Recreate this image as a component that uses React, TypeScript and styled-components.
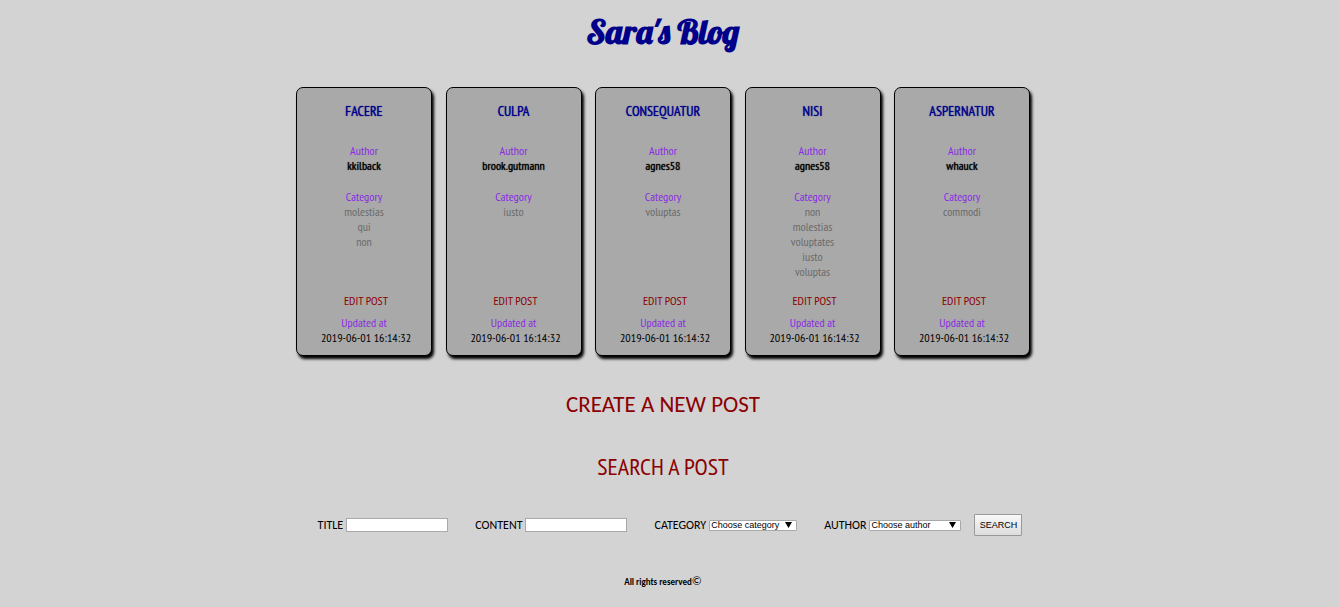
import React from "react";
import styled, { createGlobalStyle } from "styled-components";

const narrow = `"PT Sans Narrow", "Liberation Sans Narrow", "Open Sans", sans-serif`;

const GlobalStyle = createGlobalStyle`
  * { box-sizing: border-box; }
  body {
    margin: 0;
    padding: 0 13px 0 0;
    background: lightgray;
    color: #000;
    font-family: Carlito, "Open Sans", sans-serif;
    font-size: 12px;
    line-height: 15px;
  }
`;

const Page = styled.div`
  display: flex;
  flex-direction: column;
  align-items: center;
`;

const SiteTitle = styled.h1`
  margin: 8px 0 31px;
  color: darkblue;
  font-family: Lobster, "Liberation Serif", serif;
  font-size: 34px;
  font-weight: 700;
  line-height: 48px;
`;

const Posts = styled.main`
  display: flex;
  flex-wrap: wrap;
  justify-content: space-between;
  gap: 13px;
  width: 100%;
  max-width: 734px;
`;

const Card = styled.article`
  display: flex;
  flex-direction: column;
  width: 136px;
  min-height: 269px;
  padding: 13px 4px 10px;
  border: 1px solid #000;
  border-radius: 7px;
  background: darkgray;
  box-shadow: 2px 3px 3px #000;
  font-family: ${narrow};
  font-size: 12px;
  text-align: center;
`;

const CardTitle = styled.h2`
  margin: 0 0 22px;
  color: darkblue;
  font-size: 14px;
  font-weight: 400;
  line-height: 20px;
  text-shadow: 0 0 1px currentColor;
  text-transform: uppercase;
`;

const Caption = styled.span`
  color: blueviolet;
`;

const AuthorName = styled.strong`
  margin-bottom: 16px;
  font-weight: 400;
  text-shadow: 0 0 1px currentColor;
`;

const Categories = styled.ul`
  flex: 1;
  margin: 0;
  padding: 0;
  color: dimgray;
  list-style: none;
`;

const EditLink = styled.a`
  margin: 14px 0 7px 4px;
  color: darkred;
  text-decoration: none;
`;

const Stamp = styled.time`
  margin-left: 4px;
`;

const CreateLink = styled.a`
  margin-top: 33px;
  color: darkred;
  font-size: 23px;
  line-height: 30px;
  text-decoration: none;
`;

const SearchHeading = styled.h2`
  margin: 33px 0 32px;
  color: darkred;
  font-family: ${narrow};
  font-size: 24px;
  font-weight: 400;
  line-height: 30px;
`;

const SearchForm = styled.form`
  display: flex;
  flex-wrap: wrap;
  align-items: center;
  justify-content: center;
  gap: 27px;
  padding-left: 14px;
`;

const Field = styled.label`
  display: flex;
  align-items: center;
  gap: 3px;
`;

const TextInput = styled.input`
  width: 102px;
  height: 14px;
  padding: 0 2px;
  border: 1px solid darkgray;
  background: #fff;
  font: 9px "Liberation Sans", sans-serif;
`;

const SelectBox = styled.span`
  position: relative;
  display: flex;
`;

const Select = styled.select<{ $width: number }>`
  appearance: none;
  width: ${(p) => p.$width}px;
  height: 11px;
  padding: 0 1px;
  border: 1px solid darkgray;
  border-radius: 1px;
  background: #fff;
  color: #000;
  font: 9px/9px "Liberation Sans", sans-serif;
`;

const Arrow = styled.svg`
  position: absolute;
  top: 2px;
  right: 5px;
  width: 7px;
  height: 6px;
  pointer-events: none;
`;

const Actions = styled.div`
  display: flex;
  align-items: center;
  gap: 13px;
`;

const SearchButton = styled.button`
  width: 48px;
  height: 22px;
  padding: 0;
  border: 1px solid #999;
  border-radius: 1px;
  background: linear-gradient(#f8f8f8, #ddd);
  color: #000;
  font: 9px "Liberation Sans", sans-serif;
`;

const Footer = styled.footer`
  display: flex;
  align-items: center;
  margin: 38px 0 16px;
  font-size: 9px;
  font-weight: 700;
`;

const Copyright = styled.span`
  font-size: 12px;
  font-weight: 400;
`;

const posts = [
  { title: "facere", author: "kkilback", categories: ["molestias", "qui", "non"] },
  { title: "culpa", author: "brook.gutmann", categories: ["iusto"] },
  { title: "consequatur", author: "agnes58", categories: ["voluptas"] },
  { title: "nisi", author: "agnes58", categories: ["non", "molestias", "voluptates", "iusto", "voluptas"] },
  { title: "aspernatur", author: "whauck", categories: ["commodi"] },
];

function PostCard({ title, author, categories }: (typeof posts)[number]) {
  return (
    <Card>
      <CardTitle>{title}</CardTitle>
      <Caption>Author</Caption>
      <AuthorName>{author}</AuthorName>
      <Caption>Category</Caption>
      <Categories>
        {categories.map((name) => (
          <li key={name}>{name}</li>
        ))}
      </Categories>
      <EditLink href="#edit">EDIT POST</EditLink>
      <Caption>Updated at</Caption>
      <Stamp dateTime="2019-06-01T16:14:32">2019-06-01 16:14:32</Stamp>
    </Card>
  );
}

function Dropdown({ id, width, placeholder }: { id: string; width: number; placeholder: string }) {
  return (
    <SelectBox>
      <Select id={id} $width={width}>
        <option>{placeholder}</option>
      </Select>
      <Arrow viewBox="0 0 7 6" aria-hidden="true">
        <path d="M0 0h7L3.5 6z" />
      </Arrow>
    </SelectBox>
  );
}

export default function App() {
  return (
    <>
      <GlobalStyle />
      <Page>
        <SiteTitle>Sara's Blog</SiteTitle>
        <Posts>
          {posts.map((post) => (
            <PostCard key={post.title} {...post} />
          ))}
        </Posts>
        <CreateLink href="#create">CREATE A NEW POST</CreateLink>
        <SearchHeading>SEARCH A POST</SearchHeading>
        <SearchForm>
          <Field htmlFor="title">
            TITLE
            <TextInput id="title" />
          </Field>
          <Field htmlFor="content">
            CONTENT
            <TextInput id="content" />
          </Field>
          <Field htmlFor="category">
            CATEGORY
            <Dropdown id="category" width={88} placeholder="Choose category" />
          </Field>
          <Actions>
            <Field htmlFor="author">
              AUTHOR
              <Dropdown id="author" width={92} placeholder="Choose author" />
            </Field>
            <SearchButton type="button">SEARCH</SearchButton>
          </Actions>
        </SearchForm>
        <Footer>
          All rights reserved<Copyright>©</Copyright>
        </Footer>
      </Page>
    </>
  );
}
